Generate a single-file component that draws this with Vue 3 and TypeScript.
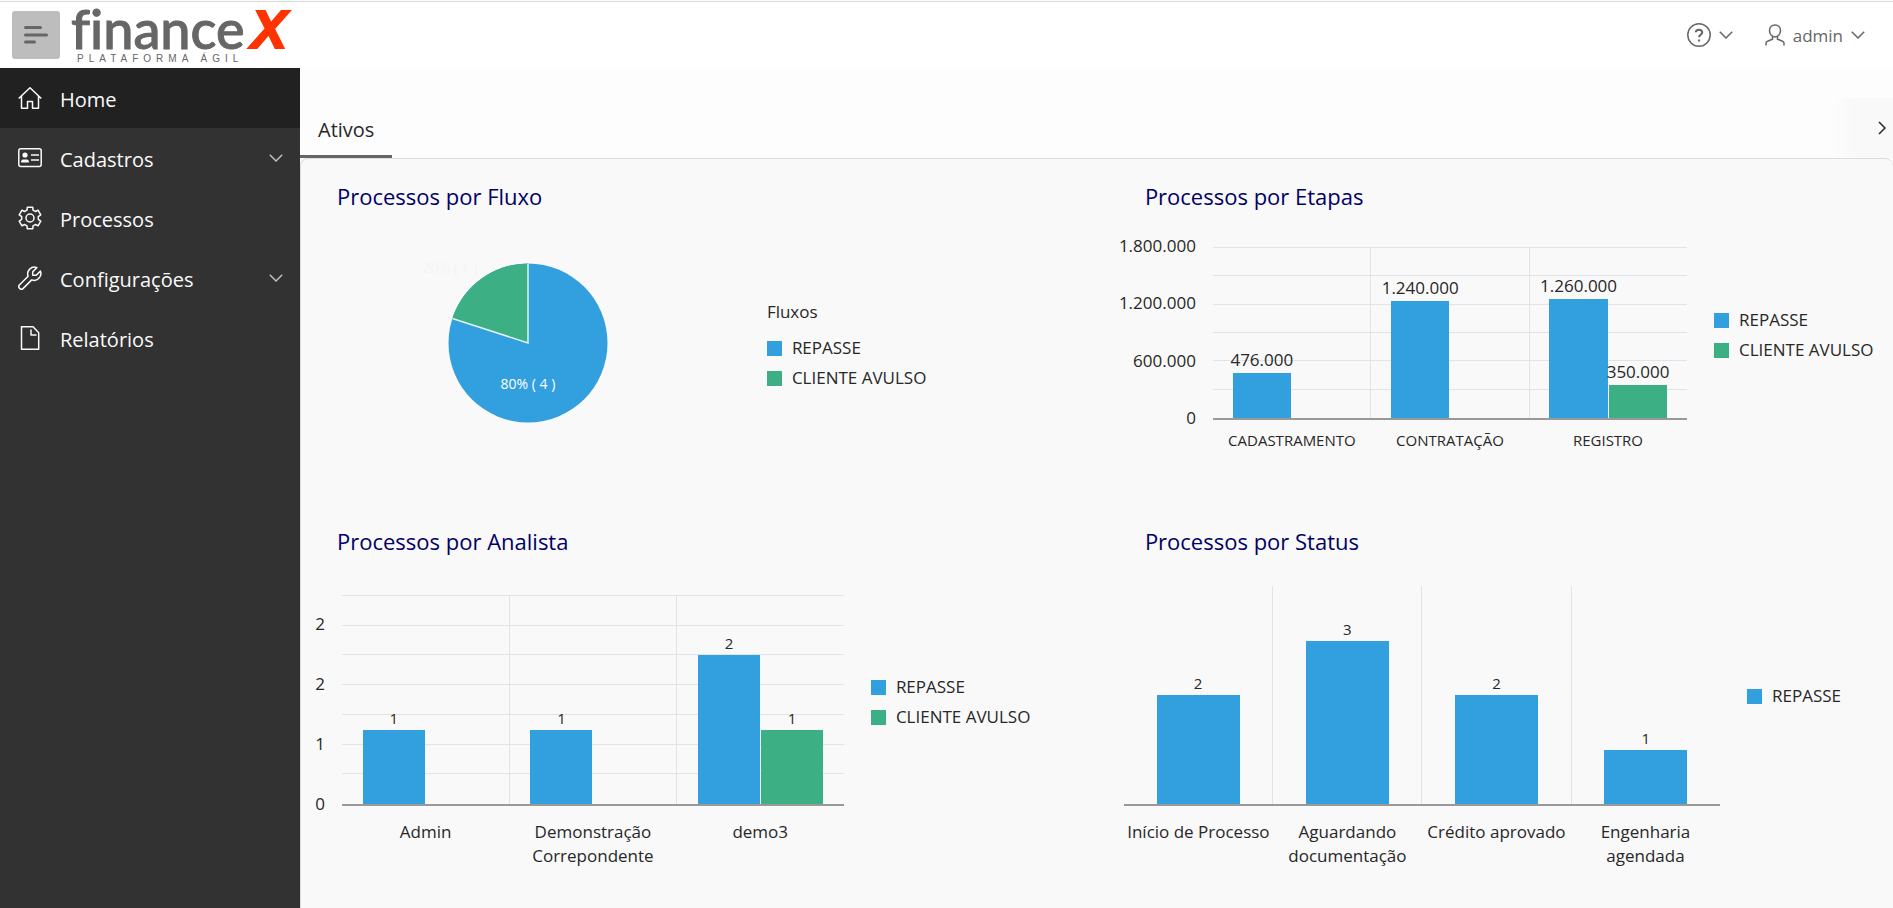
<script setup lang="ts">
type IconName = 'home' | 'card' | 'gear' | 'wrench' | 'file'

interface NavItem {
  label: string
  icon: IconName
  expandable?: boolean
  active?: boolean
}

interface Series {
  name: string
  tone: 'blue' | 'green'
}

interface Category {
  label: string
  values: (number | null)[]
}

interface BarChart {
  id: string
  title: string
  max: number
  gridLines: number
  ticks: { at: number; text: string }[]
  series: Series[]
  categories: Category[]
}

const nav: NavItem[] = [
  { label: 'Home', icon: 'home', active: true },
  { label: 'Cadastros', icon: 'card', expandable: true },
  { label: 'Processos', icon: 'gear' },
  { label: 'Configurações', icon: 'wrench', expandable: true },
  { label: 'Relatórios', icon: 'file' },
]

const repasse: Series = { name: 'REPASSE', tone: 'blue' }
const avulso: Series = { name: 'CLIENTE AVULSO', tone: 'green' }
const flows: Series[] = [repasse, avulso]

const charts: BarChart[] = [
  {
    id: 'etapas',
    title: 'Processos por Etapas',
    max: 1800000,
    gridLines: 6,
    ticks: [
      { at: 0, text: '0' },
      { at: 600000, text: '600.000' },
      { at: 1200000, text: '1.200.000' },
      { at: 1800000, text: '1.800.000' },
    ],
    series: flows,
    categories: [
      { label: 'CADASTRAMENTO', values: [476000, null] },
      { label: 'CONTRATAÇÃO', values: [1240000, null] },
      { label: 'REGISTRO', values: [1260000, 350000] },
    ],
  },
  {
    id: 'analista',
    title: 'Processos por Analista',
    max: 2.8,
    gridLines: 7,
    ticks: [
      { at: 0, text: '0' },
      { at: 0.8, text: '1' },
      { at: 1.6, text: '2' },
      { at: 2.4, text: '2' },
    ],
    series: flows,
    categories: [
      { label: 'Admin', values: [1, null] },
      { label: 'Demonstração Correpondente', values: [1, null] },
      { label: 'demo3', values: [2, 1] },
    ],
  },
  {
    id: 'status',
    title: 'Processos por Status',
    max: 4,
    gridLines: 0,
    ticks: [],
    series: [repasse],
    categories: [
      { label: 'Início de Processo', values: [2] },
      { label: 'Aguardando documentação', values: [3] },
      { label: 'Crédito aprovado', values: [2] },
      { label: 'Engenharia agendada', values: [1] },
    ],
  },
]

const pct = (value: number, max: number): string => `${(value / max) * 100}%`

const format = (value: number): string =>
  String(value).replace(/\B(?=(\d{3})+$)/g, '.')

function gearPath(): string {
  const points: string[] = []
  for (let tooth = 0; tooth < 6; tooth++) {
    const base = tooth * 60 - 90
    const corners = [[-21, 8.4], [-14, 11.2], [14, 11.2], [21, 8.4]]
    for (const [offset, radius] of corners) {
      const a = ((base + offset) * Math.PI) / 180
      points.push(`${(12 + radius * Math.cos(a)).toFixed(2)} ${(12 + radius * Math.sin(a)).toFixed(2)}`)
    }
  }
  return `M${points.join('L')}Z`
}
const gear = gearPath()
</script>

<template>
  <div class="app">
    <header class="topbar">
      <button class="menu-button" type="button" aria-label="Menu">
        <svg width="24" height="18" viewBox="0 0 24 18"><path d="M1.5 1.5h15M1.5 9h21M1.5 16h9" /></svg>
      </button>
      <a class="logo" href="#" aria-label="financeX Plataforma Ágil">
        <svg width="224" height="66" viewBox="0 0 224 66">
          <text class="logo-name" x="-1" y="47">finance</text>
          <text class="logo-x" x="179" y="46">X</text>
          <text class="logo-tag" x="5" y="60">PLATAFORMA ÁGIL</text>
        </svg>
      </a>
      <div class="actions">
        <button class="action" type="button" aria-label="Ajuda">
          <svg width="24" height="24" viewBox="0 0 24 24">
            <circle cx="12" cy="12" r="11.2" />
            <path class="thick" d="M8.8 9.3C8.8 7.6 10.2 6.8 12 6.8s3.2 1 3.2 2.6c0 2.2-3.1 2.3-3.1 4.8M12.1 16.6v2" />
          </svg>
          <svg class="caret" width="14" height="8" viewBox="0 0 14 8"><path d="M.8.8 7 7 13.200.8" /></svg>
        </button>
        <button class="action" type="button">
          <svg width="20" height="22" viewBox="0 0 20 22">
            <path d="M10 1C6.700 1 4.500 3.400 4.500 6.500S6.700 13 10 13s5.500-3.400 5.500-6.500S13.300 1 10 1ZM1 21.500v-2.200c0-1 .5-1.700 1.500-2L7.500 15.200v-2.600M19 21.500v-2.200c0-1-.5-1.700-1.500-2l-5-2.100v-2.600" />
          </svg>
          <span>admin</span>
          <svg class="caret" width="14" height="8" viewBox="0 0 14 8"><path d="M.8.8 7 7 13.200.8" /></svg>
        </button>
      </div>
    </header>

    <div class="body">
      <nav class="sidebar" aria-label="Principal">
        <a v-for="item in nav" :key="item.label" href="#" class="nav-item" :class="{ active: item.active }">
          <svg class="nav-icon" width="24" height="24" viewBox="0 0 24 24">
            <path v-if="item.icon === 'home'" d="M.7 12.500 12 1.700l11.300 10.800M3.500 10v12.300h6V15.500h5v6.800h6V10" />
            <template v-else-if="item.icon === 'card'">
              <rect x=".8" y="2.800" width="22.400" height="17.800" rx="2" />
              <path d="M13 9h8M13 14h8" />
              <path class="solid" d="M3.200 16.500v-1.200q0-1.800 1.800-1.800h4q1.800 0 1.800 1.800v1.200Z" />
              <circle class="solid" cx="7" cy="9" r="2.600" />
            </template>
            <template v-else-if="item.icon === 'gear'">
              <path :d="gear" />
              <circle cx="12" cy="12" r="4" />
            </template>
            <path
              v-else-if="item.icon === 'wrench'"
              d="M14.700 5.800v3.500h3.500l4.200-4.200a6.800 6.800 0 0 1-8.700 8.800L5.200 22.400a2.500 2.500 0 0 1-3.600-3.600L10.100 10.300A6.800 6.800 0 0 1 18.900 1.600Z"
            />
            <path v-else d="M3.500 .8h11.500l5.700 5.900v16.500H3.500ZM13 3.500V9h5.500" />
          </svg>
          <span class="nav-label">{{ item.label }}</span>
          <svg v-if="item.expandable" class="caret" width="14" height="8" viewBox="0 0 14 8"><path d="M.8.8 7 7 13.200.8" /></svg>
        </a>
      </nav>

      <main class="content">
        <div class="tabs">
          <button class="tab" type="button" aria-current="page">Ativos</button>
          <button class="tab-next" type="button" aria-label="Próxima aba">
            <svg width="8" height="14" viewBox="0 0 8 14"><path d="M1 1l6 6-6 6" /></svg>
          </button>
        </div>

        <div class="panel">
          <section class="card fluxo">
            <h2>Processos por Fluxo</h2>
            <div class="pie-body">
              <div class="pie-area">
                <svg class="pie" width="160" height="160" viewBox="0 0 160 160">
                  <circle class="blue" cx="80" cy="80" r="79.500" />
                  <path class="green" d="M80 80V.5A79.500 79.500 0 0 0 4.390 55.430Z" />
                  <path class="split" d="M80 .5V80L4.390 55.430" />
                  <text class="pie-label" x="80" y="126" text-anchor="middle">80% ( 4 )</text>
                  <text class="pie-label faint" x="2" y="10" text-anchor="middle">20% ( 1 )</text>
                </svg>
              </div>
              <div class="legend">
                <p class="legend-title">Fluxos</p>
                <ul>
                  <li v-for="s in flows" :key="s.name"><i :class="s.tone"></i>{{ s.name }}</li>
                </ul>
              </div>
            </div>
          </section>

          <section v-for="chart in charts" :key="chart.id" class="card" :class="chart.id">
            <h2>{{ chart.title }}</h2>
            <div class="chart">
              <div v-if="chart.ticks.length" class="axis">
                <span v-for="tick in chart.ticks" :key="tick.at" :style="{ bottom: pct(tick.at, chart.max) }">{{ tick.text }}</span>
              </div>
              <div class="plot">
                <div
                  v-for="n in chart.gridLines"
                  :key="n"
                  class="grid-line"
                  :style="{ bottom: pct(n, chart.gridLines) }"
                ></div>
                <div v-for="cat in chart.categories" :key="cat.label" class="slot">
                  <div class="bars">
                    <div v-for="(value, i) in cat.values" :key="i" class="bar-column">
                      <template v-if="value !== null">
                        <span class="value">{{ format(value) }}</span>
                        <div class="bar" :class="chart.series[i].tone" :style="{ height: pct(value, chart.max) }"></div>
                      </template>
                    </div>
                  </div>
                </div>
              </div>
              <ul class="legend">
                <li v-for="s in chart.series" :key="s.name"><i :class="s.tone"></i>{{ s.name }}</li>
              </ul>
              <div class="categories">
                <span v-for="cat in chart.categories" :key="cat.label">{{ cat.label }}</span>
              </div>
            </div>
          </section>
        </div>
      </main>
    </div>
  </div>
</template>

<style>
body {
  margin: 0;
}
</style>

<style scoped>
.app {
  display: flex;
  flex-direction: column;
  min-height: 100vh;
  box-sizing: border-box;
  padding-top: 1px;
  background: #fafafa;
  color: #272727;
  font-family: "Open Sans", "Noto Sans", sans-serif;
  font-size: 17px;
}

svg {
  display: block;
  flex: none;
  fill: none;
  stroke: currentColor;
  stroke-width: 1.5;
}

button {
  border: 0;
  padding: 0;
  background: none;
  color: inherit;
  font: inherit;
}

ul {
  margin: 0;
  padding: 0;
  list-style: none;
}

.topbar {
  display: flex;
  align-items: center;
  height: 66px;
  padding: 0 28px 0 12px;
  border-top: 1px solid #dcdcdc;
  background: #fff;
  color: #666;
}

.menu-button {
  display: flex;
  align-items: center;
  width: 48px;
  height: 48px;
  padding-left: 12px;
  border-radius: 3px;
  background: #bdbdbd;
}

.menu-button svg {
  stroke-width: 3;
  stroke-linecap: round;
}

.logo {
  margin-left: 12px;
  color: #666;
}

.logo svg {
  overflow: visible;
}

.logo text {
  stroke: none;
  fill: #666;
}

.logo .logo-name {
  font-family: Lato, sans-serif;
  font-size: 54px;
  font-weight: 500;
  font-variant-ligatures: none;
  stroke: #666;
  stroke-width: 1;
}

.logo .logo-x {
  fill: #ff3300;
  stroke: #ff3300;
  stroke-width: 2;
  font-family: "Liberation Sans", Arial, sans-serif;
  font-size: 54px;
  font-weight: 700;
  font-style: italic;
}

.logo .logo-tag {
  font-family: "Liberation Sans", Arial, sans-serif;
  font-size: 10px;
  letter-spacing: 5px;
}

.actions {
  display: flex;
  gap: 32px;
  margin-left: auto;
}

.action {
  display: flex;
  align-items: center;
  gap: 8px;
}

.thick {
  stroke-width: 2;
}

.body {
  display: flex;
  flex: 1;
}

.sidebar {
  flex: none;
  width: 300px;
  background: #323232;
}

.nav-item {
  display: flex;
  align-items: center;
  gap: 18px;
  height: 60px;
  box-sizing: border-box;
  padding: 0 17px 0 18px;
  color: #fafafa;
  font-size: 20px;
  text-decoration: none;
}

.nav-item.active {
  background: #212121;
}

.nav-icon {
  stroke-linejoin: round;
}

.solid {
  fill: currentColor;
  stroke: none;
}

.nav-label {
  flex: 1;
  padding-top: 2px;
}

.nav-item .caret {
  color: #bdbdbd;
}

.content {
  flex: 1;
  display: flex;
  flex-direction: column;
  min-width: 0;
  padding-top: 30px;
  background: #fdfdfd;
}

.tabs {
  display: flex;
  justify-content: space-between;
  height: 60px;
}

.tab {
  box-sizing: border-box;
  padding: 5px 18px 0;
  border-bottom: 3px solid #666;
  font-size: 20px;
}

.tab-next {
  display: flex;
  align-items: center;
  justify-content: flex-end;
  width: 60px;
  padding-right: 7px;
  background: linear-gradient(to right, #fdfdfd, #f9f9f9 20px);
}

.panel {
  flex: 1;
  display: grid;
  grid-template-columns: 34fr 33fr;
  grid-auto-rows: 345px;
  border: 1px solid #dcdcdc;
  border-bottom: 0;
  border-right: 0;
  border-radius: 8px 8px 0 0;
  background: #f9f9f9;
}

h2 {
  margin: 0;
  padding: 21px 0 0 36px;
  color: #000066;
  font-size: 22px;
  font-weight: 400;
  line-height: 32px;
}

.blue {
  background: #329fde;
  fill: #329fde;
}

.green {
  background: #3daf85;
  fill: #3daf85;
}

.pie-body {
  display: flex;
  align-items: center;
  gap: 27px;
  padding: 51px 181px 0 15px;
}

.pie-area {
  flex: 1;
  display: flex;
  justify-content: center;
}

.pie {
  overflow: visible;
  stroke: none;
}

.split {
  stroke: #e4f3f0;
  stroke-width: 1.5;
}

.pie-label {
  fill: #fff;
  font-size: 14px;
}

.pie-label.faint {
  fill: #f4f4f4;
}

.legend {
  align-self: center;
  padding-top: 2px;
  line-height: 30px;
  white-space: nowrap;
}

.legend li {
  display: flex;
  align-items: center;
  gap: 10px;
}

.legend i {
  width: 15px;
  height: 15px;
}

.legend-title {
  margin: 2px 0 6px;
}

.pie-body .legend {
  width: 161px;
}

.chart {
  display: grid;
  grid-template-columns: 1fr auto;
  grid-template-rows: 172px auto;
  column-gap: 27px;
}

.axis {
  grid-row: 1;
  position: relative;
  margin-right: -10px;
}

.axis span {
  position: absolute;
  right: 0;
  transform: translateY(40%);
  line-height: 24px;
}

.plot {
  grid-row: 1;
  position: relative;
  display: flex;
  border-bottom: 2px solid #999;
}

.grid-line {
  position: absolute;
  left: 0;
  right: 0;
  border-top: 1px solid #dfe4ea;
}

.slot {
  position: relative;
  flex: 1;
  box-sizing: border-box;
}

.slot + .slot {
  border-left: 1px solid #dfe4ea;
}

.bars {
  display: flex;
  gap: 1px;
  width: 75%;
  height: 100%;
  margin: 0 auto;
}

.bar-column {
  display: flex;
  flex: 1;
  flex-direction: column;
  align-items: center;
  justify-content: flex-end;
  min-width: 0;
}

.bar {
  flex: none;
  width: 100%;
}

.value {
  font-size: 15px;
  line-height: 24px;
  white-space: nowrap;
}

.categories {
  display: flex;
  padding-top: 14px;
  line-height: 24px;
  text-align: center;
}

.categories span {
  flex: 1 0 0;
  min-width: 0;
}

.etapas .chart {
  grid-template-columns: 77px 1fr 161px;
  padding: 36px 18px 0 0;
}

.etapas .value {
  font-size: 17px;
  line-height: 26px;
}

.etapas .categories {
  grid-column: 2;
  padding-top: 8px;
  font-size: 15px;
}

.analista .chart {
  grid-template-columns: 14px 1fr 161px;
  grid-template-rows: 210px auto;
  padding: 39px 77px 0 0;
}

.analista .categories {
  grid-column: 2;
}

.analista .categories span {
  padding: 0 20px;
}

.status .chart {
  grid-template-rows: 220px auto;
  padding: 29px 52px 0 15px;
}

.status .legend {
  padding-top: 0;
}

.status .bars {
  width: 56%;
}
</style>
